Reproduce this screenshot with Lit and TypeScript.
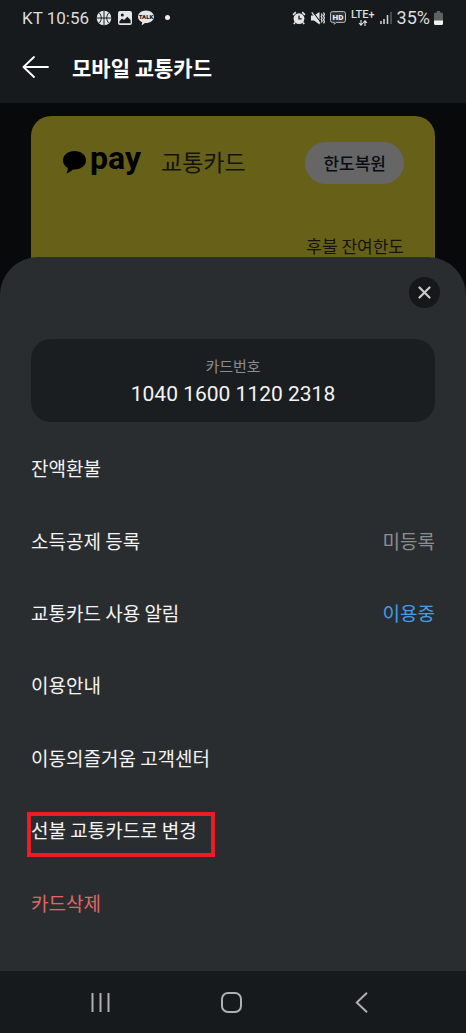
import { LitElement, html, css, svg, nothing } from "lit";
import { customElement, property } from "lit/decorators.js";
import { classMap } from "lit/directives/class-map.js";

interface MenuItem {
  label: string;
  value?: string;
  tone?: "muted" | "active";
  danger?: boolean;
  marked?: boolean;
}

const MENU: MenuItem[] = [
  { label: "잔액환불" },
  { label: "소득공제 등록", value: "미등록", tone: "muted" },
  { label: "교통카드 사용 알림", value: "이용중", tone: "active" },
  { label: "이용안내" },
  { label: "이동의즐거움 고객센터" },
  { label: "선불 교통카드로 변경", marked: true },
  { label: "카드삭제", danger: true },
];

const buttonReset = css`
  button {
    margin: 0;
    padding: 0;
    border: 0;
    background: none;
    color: inherit;
    font: inherit;
    cursor: pointer;
  }
  svg {
    display: block;
    flex: none;
  }
`;

@customElement("status-bar")
export class StatusBar extends LitElement {
  static styles = css`
    :host {
      display: flex;
      align-items: center;
      justify-content: space-between;
      height: 35px;
      padding: 0 23px 0 22px;
      color: #dcdddd;
      font-family: Roboto, "Noto Sans CJK KR", sans-serif;
      font-size: 17px;
      line-height: 20px;
    }
    .group {
      display: flex;
      align-items: center;
    }
    .left {
      gap: 6px;
    }
    .clock {
      margin-right: 1px;
    }
    .right {
      gap: 5px;
    }
    .dot {
      width: 5px;
      height: 5px;
      margin-left: 5px;
      border-radius: 50%;
      background: #eeeeee;
    }
    .network {
      display: flex;
      flex-direction: column;
      align-items: center;
      font-size: 11px;
      font-weight: 500;
      line-height: 10px;
    }
    .battery {
      display: flex;
      align-items: center;
      gap: 4px;
      font-size: 18px;
    }
    svg {
      display: block;
      flex: none;
    }
    .tiny {
      font-family: Roboto, sans-serif;
      font-weight: 900;
    }
  `;

  render() {
    return html`
      <div class="group left">
        <span class="clock">KT 10:56</span>
        <svg width="16" height="16" viewBox="0 0 16 16" aria-hidden="true">
          <circle cx="8" cy="8" r="7.3" fill="#e6e6e6" />
          <g fill="none" stroke="#171a1d" stroke-width="1">
            <path d="M8 .7v14.6M.7 8h14.6" />
            <path d="M3 2.6c3 3.2 3 7.600 0 10.800M13 2.600c-3 3.200-3 7.600 0 10.800" />
          </g>
        </svg>
        <svg width="14" height="14" viewBox="0 0 14 14" aria-hidden="true">
          <path
            fill="#e6e6e6"
            fill-rule="evenodd"
            d="M2 0h10a2 2 0 0 1 2 2v10a2 2 0 0 1-2 2H2a2 2 0 0 1-2-2V2a2 2 0 0 1 2-2zm-.6 10.200V12.300h11.200V9L9.300 5.800 6 9 4 7.500zM4.300 2.500a1.500 1.500 0 1 0 0 3 1.500 1.500 0 0 0 0-3z"
          />
        </svg>
        <svg width="16" height="16" viewBox="0 0 16 16" aria-hidden="true">
          <path
            fill="#e6e6e6"
            d="M8 .5c4.400 0 8 2.800 8 6.300s-3.600 6.300-8 6.300l-1-.1-3.400 2.500.6-3.200C1.700 11.200 0 9.200 0 6.800 0 3.300 3.600.5 8 .5z"
          />
          <text class="tiny" x="8" y="9" text-anchor="middle" font-size="6" fill="#171a1d">TALK</text>
        </svg>
        <i class="dot"></i>
      </div>
      <div class="group right">
        <svg width="14" height="14" viewBox="0 0 14 14" aria-hidden="true">
          <path d="M1 3.800 3.800 1.200M13 3.800 10.200 1.200M3 11.500 1.800 13M11 11.500 12.200 13" stroke="#e6e6e6" stroke-width="1.600" />
          <circle cx="7" cy="7.600" r="5.400" fill="#e6e6e6" />
          <path d="M7 4.600v3.200h2.600" fill="none" stroke="#171a1d" stroke-width="1.300" />
        </svg>
        <svg width="14" height="14" viewBox="0 0 14 14" aria-hidden="true">
          <path d="M0 4.500h3L8.500 1v12.500L3 9.500H0z" fill="#e6e6e6" />
          <path d="M1.700.8 9.500 11" stroke="#171a1d" stroke-width="1.200" />
          <path d="M.8 1.300 9 12.500" stroke="#e6e6e6" stroke-width="1.200" />
          <path d="M10.200 2.500l1 1.500-1 1.500 1 1.500-1 1.500 1 1.500-1 1.500M12.500 1.500l1 1.800-1 1.800 1 1.900-1 1.800 1 1.800-1 1.800" fill="none" stroke="#e6e6e6" stroke-width="1.200" />
        </svg>
        <svg width="16" height="14" viewBox="0 0 16 14" aria-hidden="true">
          <path
            d="M2.500.6h11a2 2 0 0 1 2 2v6.800a2 2 0 0 1-2 2H6.200l-1.900 1.900v-1.900H2.500a2 2 0 0 1-2-2V2.600a2 2 0 0 1 2-2z"
            fill="#303335"
            stroke="#bfc0c0"
          />
          <text class="tiny" x="8" y="9" text-anchor="middle" font-size="8" fill="#f0f0f0">HD</text>
        </svg>
        <span class="network">
          LTE+
          <svg width="10" height="6" viewBox="0 0 10 6" aria-hidden="true">
            <path d="M3 0v5M1 3l2 2.200L5 3M7 6V1M5.200 2.800 7 .8l1.800 2" fill="none" stroke="#e6e6e6" stroke-width="1.100" />
          </svg>
        </span>
        <svg width="12" height="13" viewBox="0 0 12 13" aria-hidden="true">
          <path d="M1 10v3M4 8v5M7.500 4v9" stroke="#d5d6d6" stroke-width="1.500" />
          <path d="M11 1v12" stroke="#5d6062" stroke-width="1.500" />
        </svg>
        <span class="battery">
          <span>35%</span>
          <svg width="9" height="14" viewBox="0 0 9 14" aria-hidden="true">
            <path d="M3 0h3v1.500h1.500A1.500 1.500 0 0 1 9 3v7H0V3a1.500 1.500 0 0 1 1.500-1.500H3z" fill="#5f6263" />
            <path d="M0 9.500h9v3A1.500 1.500 0 0 1 7.500 14h-6A1.500 1.500 0 0 1 0 12.500z" fill="#f0f0f0" />
          </svg>
        </span>
      </div>
    `;
  }
}

@customElement("pay-card")
export class PayCard extends LitElement {
  static styles = [
    buttonReset,
    css`
      :host {
        display: block;
        padding: 26px 31px 40px 32px;
        border-radius: 20px;
        background: #676019;
        color: #14140a;
      }
      .top {
        display: flex;
        align-items: flex-start;
      }
      .brand {
        display: flex;
        align-items: flex-end;
        gap: 4px;
        color: #000000;
        font-family: Roboto, sans-serif;
        font-size: 32px;
        font-weight: 700;
        line-height: 32px;
      }
      .name {
        margin-left: 20px;
        font-size: 23px;
        font-weight: 400;
        line-height: 38px;
      }
      .top button {
        height: 42px;
        margin-left: auto;
        padding: 0 18px;
        border-radius: 21px;
        background: #666667;
        color: #0a0c12;
        font-size: 17px;
        font-weight: 500;
        line-height: 24px;
      }
      .limit {
        margin: 50px 0 0;
        font-size: 17px;
        line-height: 24px;
        text-align: right;
      }
    `,
  ];

  render() {
    return html`
      <div class="top">
        <span class="brand">
          <svg width="23" height="23" viewBox="0 0 23 23" aria-hidden="true">
            <path d="M11.500 0C18 0 23 4 23 9.300s-5 9.200-11.500 9.200l-1.500-.1c-2 1.600-4 3-6.600 4 .9-1.600 1.300-3.300 1.500-5.300C1.900 15.500 0 12.700 0 9.300 0 4 5 0 11.500 0z" />
          </svg>
          pay
        </span>
        <span class="name">교통카드</span>
        <button type="button">한도복원</button>
      </div>
      <p class="limit">후불 잔여한도</p>
    `;
  }
}

@customElement("menu-row")
export class MenuRow extends LitElement {
  @property({ attribute: false }) item!: MenuItem;

  static styles = [
    buttonReset,
    css`
      :host {
        display: block;
      }
      .row {
        display: flex;
        align-items: center;
        justify-content: space-between;
        width: 100%;
        height: 100%;
        color: #f4f4f4;
        font-size: 19px;
        line-height: 28px;
        text-align: left;
      }
      .danger {
        color: #e06767;
      }
      .muted {
        color: #8b8d8f;
      }
      .active {
        color: #419ee8;
      }
      .marked {
        position: relative;
      }
      .marked::after {
        content: "";
        position: absolute;
        inset: -4px -18px -13px -4px;
        border: 4px solid #ed1c24;
      }
    `,
  ];

  render() {
    const { label, value, tone, danger, marked } = this.item;
    return html`
      <button type="button" class=${classMap({ row: true, danger: !!danger })}>
        <span class=${classMap({ marked: !!marked })}>${label}</span>
        ${value ? html`<span class=${tone ?? ""}>${value}</span>` : nothing}
      </button>
    `;
  }
}

@customElement("app-root")
export class AppRoot extends LitElement {
  static styles = [
    buttonReset,
    css`
      :host {
        display: flex;
        flex-direction: column;
        min-height: 100vh;
        background: #07090b;
        color: #f4f4f4;
        font-family: "Noto Sans CJK KR", sans-serif;
      }
      header {
        padding-bottom: 4px;
        background: #171a1d;
      }
      .title-bar {
        display: flex;
        align-items: center;
        gap: 23px;
        height: 64px;
        padding: 0 22px;
      }
      h1 {
        margin: 0;
        color: #ffffff;
        font-size: 21px;
        font-weight: 700;
        line-height: 30px;
      }
      pay-card {
        margin: 13px 31px 0;
      }
      .sheet {
        position: relative;
        display: flex;
        flex: 1;
        flex-direction: column;
        margin-top: -41px;
        padding: 20px 31px 32px;
        border-radius: 38px 38px 0 0;
        background: #2a2d30;
      }
      .close {
        display: grid;
        place-items: center;
        align-self: flex-end;
        width: 31px;
        height: 31px;
        margin-right: -5px;
        border-radius: 50%;
        background: #151719;
      }
      .number {
        display: flex;
        flex-direction: column;
        align-items: center;
        gap: 4px;
        margin: 31px 0 10px;
        padding: 16px 16px 14px;
        border-radius: 20px;
        background: #1b1e21;
      }
      .number .caption {
        color: #8b8d8f;
        font-size: 15px;
        line-height: 22px;
      }
      .number .digits {
        font-family: Roboto, sans-serif;
        font-size: 21px;
        line-height: 27px;
      }
      .menu {
        display: flex;
        flex: 1;
        flex-direction: column;
        margin: 0;
        padding: 0;
        list-style: none;
      }
      .menu li {
        display: grid;
        flex: 1;
        min-height: 48px;
      }
      nav {
        display: flex;
        align-items: center;
        justify-content: space-between;
        height: 62px;
        padding: 0 93px 0 90px;
        background: #171a1d;
      }
    `,
  ];

  render() {
    return html`
      <header>
        <status-bar></status-bar>
        <div class="title-bar">
          <button type="button" aria-label="뒤로">
            <svg width="27" height="22" viewBox="0 0 27 22" fill="none" stroke="#ffffff" stroke-width="1.800" stroke-linecap="round" stroke-linejoin="round">
              <path d="M26 11H1.500M12 1 1.500 11 12 21" />
            </svg>
          </button>
          <h1>모바일 교통카드</h1>
        </div>
      </header>
      <pay-card></pay-card>
      <section class="sheet">
        <button type="button" class="close" aria-label="닫기">
          <svg width="13" height="13" viewBox="0 0 13 13" stroke="#c9cacb" stroke-width="2.200" stroke-linecap="round">
            <path d="M1.500 1.500l10 10M11.500 1.500l-10 10" />
          </svg>
        </button>
        <div class="number">
          <span class="caption">카드번호</span>
          <span class="digits">1040 1600 1120 2318</span>
        </div>
        <ul class="menu">
          ${MENU.map((item) => html`<li><menu-row .item=${item}></menu-row></li>`)}
        </ul>
      </section>
      <nav>
        <button type="button" aria-label="최근 앱">
          <svg width="21" height="21" viewBox="0 0 21 21" stroke="#aeb0b1" stroke-width="2">
            ${[2, 10, 18].map((x) => svg`<path d=${`M${x + 0.5} 1v19`} />`)}
          </svg>
        </button>
        <button type="button" aria-label="홈">
          <svg width="21" height="21" viewBox="0 0 21 21" fill="none" stroke="#aeb0b1" stroke-width="2">
            <rect x="1" y="1" width="19" height="19" rx="6" />
          </svg>
        </button>
        <button type="button" aria-label="이전">
          <svg width="21" height="21" viewBox="0 0 21 21" fill="none" stroke="#aeb0b1" stroke-width="2">
            <path d="M15 .800 4.800 10.500 15 20.200" />
          </svg>
        </button>
      </nav>
    `;
  }
}
